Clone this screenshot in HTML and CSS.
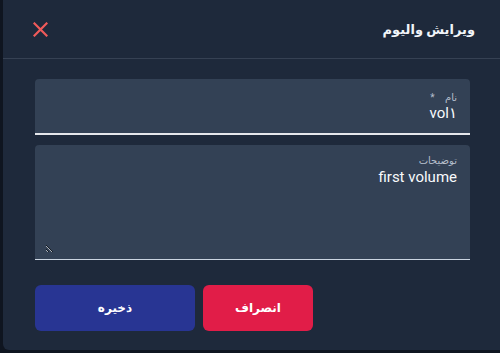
FILE: index.html
```html
<!DOCTYPE html>
<html lang="fa" dir="rtl">

<head>
    <meta charset="UTF-8">
    <meta name="viewport" content="width=device-width, initial-scale=1.0">
    <title>ویرایش والیوم</title>
    <link rel="stylesheet" href="styles.css">
</head>

<body>

    <div class="dialog">
        <!-- سربرگ -->
        <div class="dialog-head">
            <h2>ویرایش والیوم</h2>
            <button class="close" type="button" aria-label="بستن">
                <svg width="15" height="15" viewBox="0 0 15 15">
                    <path d="M1.5 1.5 L13.5 13.5 M13.5 1.5 L1.5 13.5" stroke="#f05a5a" stroke-width="2.2" stroke-linecap="square" fill="none"/>
                </svg>
            </button>
        </div>

        <!-- فرم -->
        <div class="dialog-body">
            <label class="field">
                <span class="label">نام <span class="req">*</span></span>
                <input class="value" type="text" value="vol۱">
            </label>

            <label class="field area">
                <span class="label">توضیحات</span>
                <textarea class="value" rows="3">first volume</textarea>
            </label>

            <div class="actions">
                <button class="btn cancel" type="button">انصراف</button>
                <button class="btn save" type="button">ذخیره</button>
            </div>
        </div>
    </div>

</body>

</html>
```

FILE: styles.css
```css
* {
    box-sizing: border-box;
}

body {
    margin: 0;
    background-color: #0f1520;
    font-family: Roboto, "DejaVu Sans", sans-serif;
}

.dialog {
    margin-left: 3px;
    width: 497px;
    height: 350px;
    background-color: #1e293b;
    border-bottom-left-radius: 6px;
    color: #f1f5f9;
}

.dialog-head {
    height: 59px;
    padding: 0 25px 0 30px;
    border-bottom: 1px solid #364153;

    display: flex;
    justify-content: space-between;
    align-items: center;
}

.dialog-head h2 {
    margin: 0;
    font-size: 13px;
    font-weight: bold;
}

.close {
    border: 0;
    padding: 0;
    background: none;
    display: flex;
    cursor: pointer;
}

.dialog-body {
    padding: 20px 30px 0 32px;
    display: flex;
    flex-direction: column;
}

.field {
    height: 56px;
    padding: 12px 13px 0;
    background-color: #334155;
    border-radius: 4px 4px 0 0;
    border-bottom: 2px solid #e5e7eb;

    display: flex;
    flex-direction: column;
}

.field.area {
    height: 115px;
    margin-top: 10px;
    padding-top: 9px;
    padding-bottom: 6px;
    border-bottom: 1px solid #cbd5e1;
}

.label {
    font-size: 10px;
    line-height: 13px;
    color: #b6bfcc;
}

.req {
    margin-right: 8px;
}

.value {
    border: 0;
    padding: 0;
    background: transparent;
    color: #f8fafc;
    font-family: inherit;
    font-size: 15px;
    line-height: 18px;
    outline: none;
}

textarea.value {
    flex: 1;
    margin-top: 1px;
    margin-left: -3px;
    resize: vertical;
}

.actions {
    margin-top: 25px;
    display: flex;
    justify-content: flex-end;
    gap: 8px;
}

.btn {
    height: 46px;
    border: 0;
    border-radius: 6px;
    color: white;
    font-family: inherit;
    font-size: 12px;
    font-weight: bold;
    cursor: pointer;
}

.cancel {
    width: 110px;
    background-color: #e11d48;
}

.save {
    width: 160px;
    background-color: #283593;
}
```
